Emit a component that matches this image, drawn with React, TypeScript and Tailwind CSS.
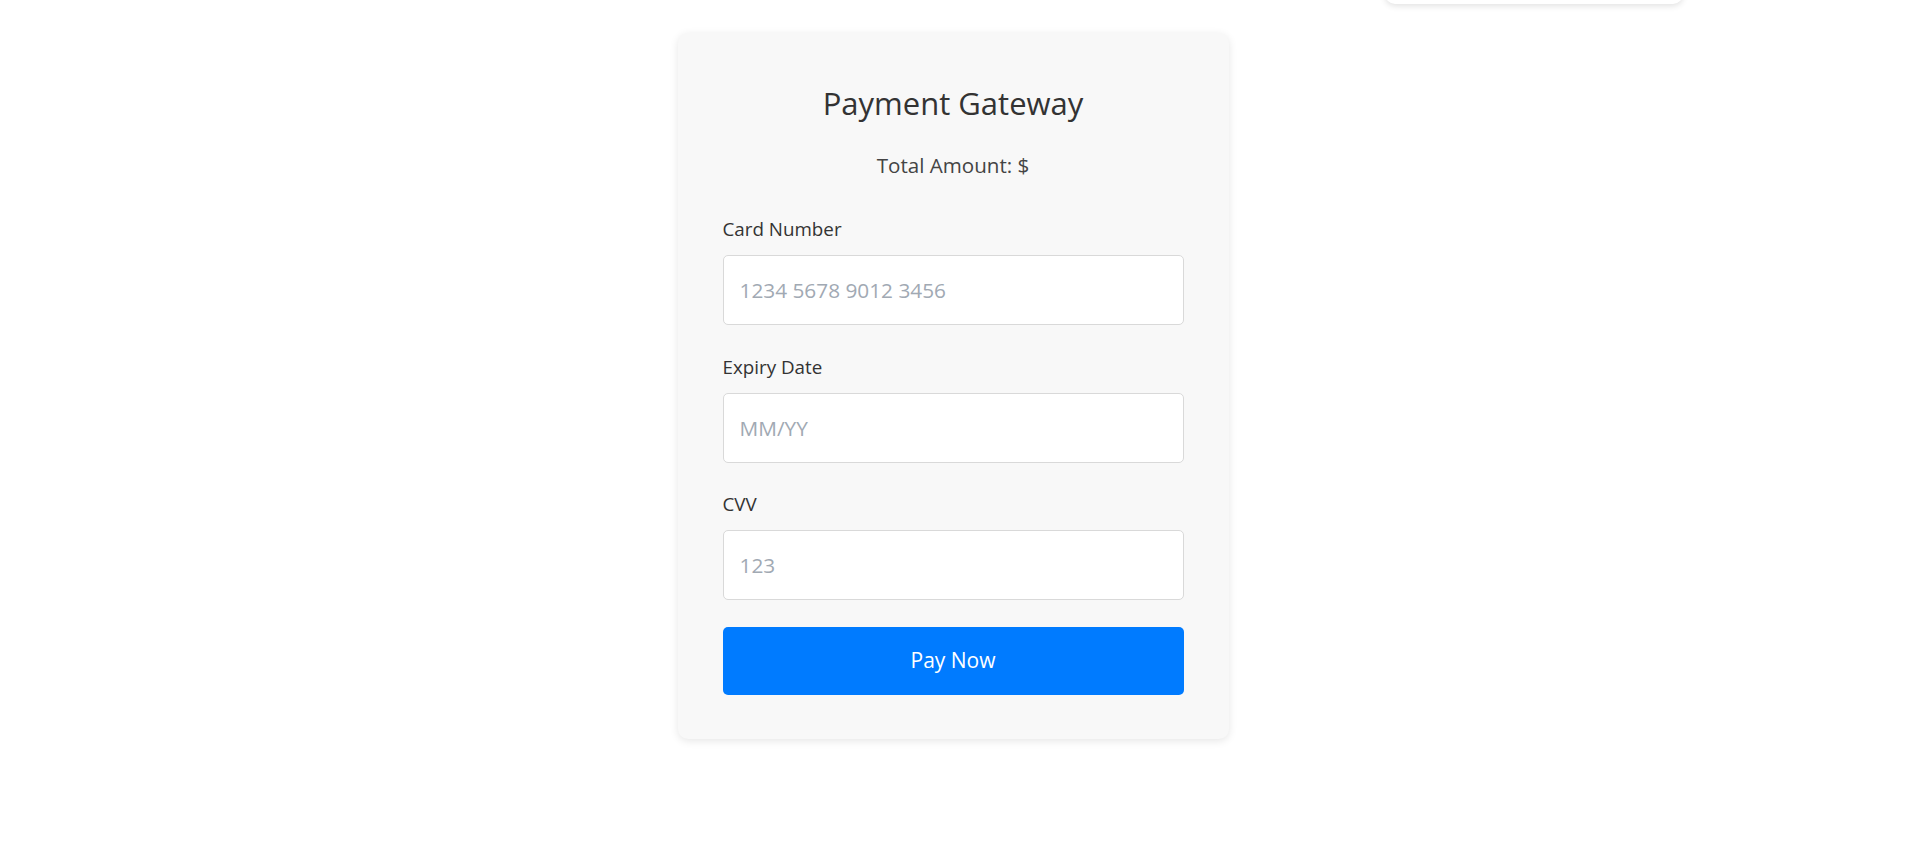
import { useState } from "react";

const Field: React.FC<{ label: string; placeholder: string; value: string; onChange: (v: string) => void }> = ({
  label,
  placeholder,
  value,
  onChange,
}) => {
  return (
    <div className="flex flex-col">
      <label className="text-[18.8px] leading-[29px] text-[#333]">{label}</label>
      <input
        value={value}
        onChange={(e) => onChange(e.target.value)}
        placeholder={placeholder}
        className="mt-[11px] h-[70px] w-full rounded-[5px] border border-[#d9d9d9] bg-white px-[16px] text-[20.8px] text-[#333] outline-none placeholder:text-[#a1a9b3]"
      />
    </div>
  );
};

export default function App() {
  const [card, setCard] = useState("");
  const [expiry, setExpiry] = useState("");
  const [cvv, setCvv] = useState("");

  return (
    <div
      className="relative min-h-screen overflow-hidden bg-white"
      style={{ fontFamily: '"Open Sans", "Noto Sans", sans-serif' }}
    >
      {/* menu peeking from the top */}
      <div className="absolute left-[1385px] top-[-60px] h-[64px] w-[298px] rounded-[10px] bg-white shadow-[0_2px_6px_rgba(0,0,0,0.12)]" />

      <div className="flex justify-center pr-[6px] pt-[33px]">
        <div className="w-[551px] rounded-[10px] bg-[#f8f8f8] px-[45px] pb-[44px] pt-[53px] shadow-[0_2px_8px_rgba(0,0,0,0.1)]">
          <h1 className="text-center text-[31px] leading-[35px] text-[#333]">Payment Gateway</h1>
          <p className="mt-[30px] text-center text-[20.6px] leading-[29px] text-[#444]">Total Amount: $</p>

          <div className="mt-[35px] flex flex-col gap-[27.5px]">
            <Field label="Card Number" placeholder="1234 5678 9012 3456" value={card} onChange={setCard} />
            <Field label="Expiry Date" placeholder="MM/YY" value={expiry} onChange={setExpiry} />
            <Field label="CVV" placeholder="123" value={cvv} onChange={setCvv} />
          </div>

          <button className="mt-[27px] h-[68px] w-full rounded-[5px] bg-[#007bff] text-[21px] text-white">
            Pay Now
          </button>
        </div>
      </div>
    </div>
  );
}
